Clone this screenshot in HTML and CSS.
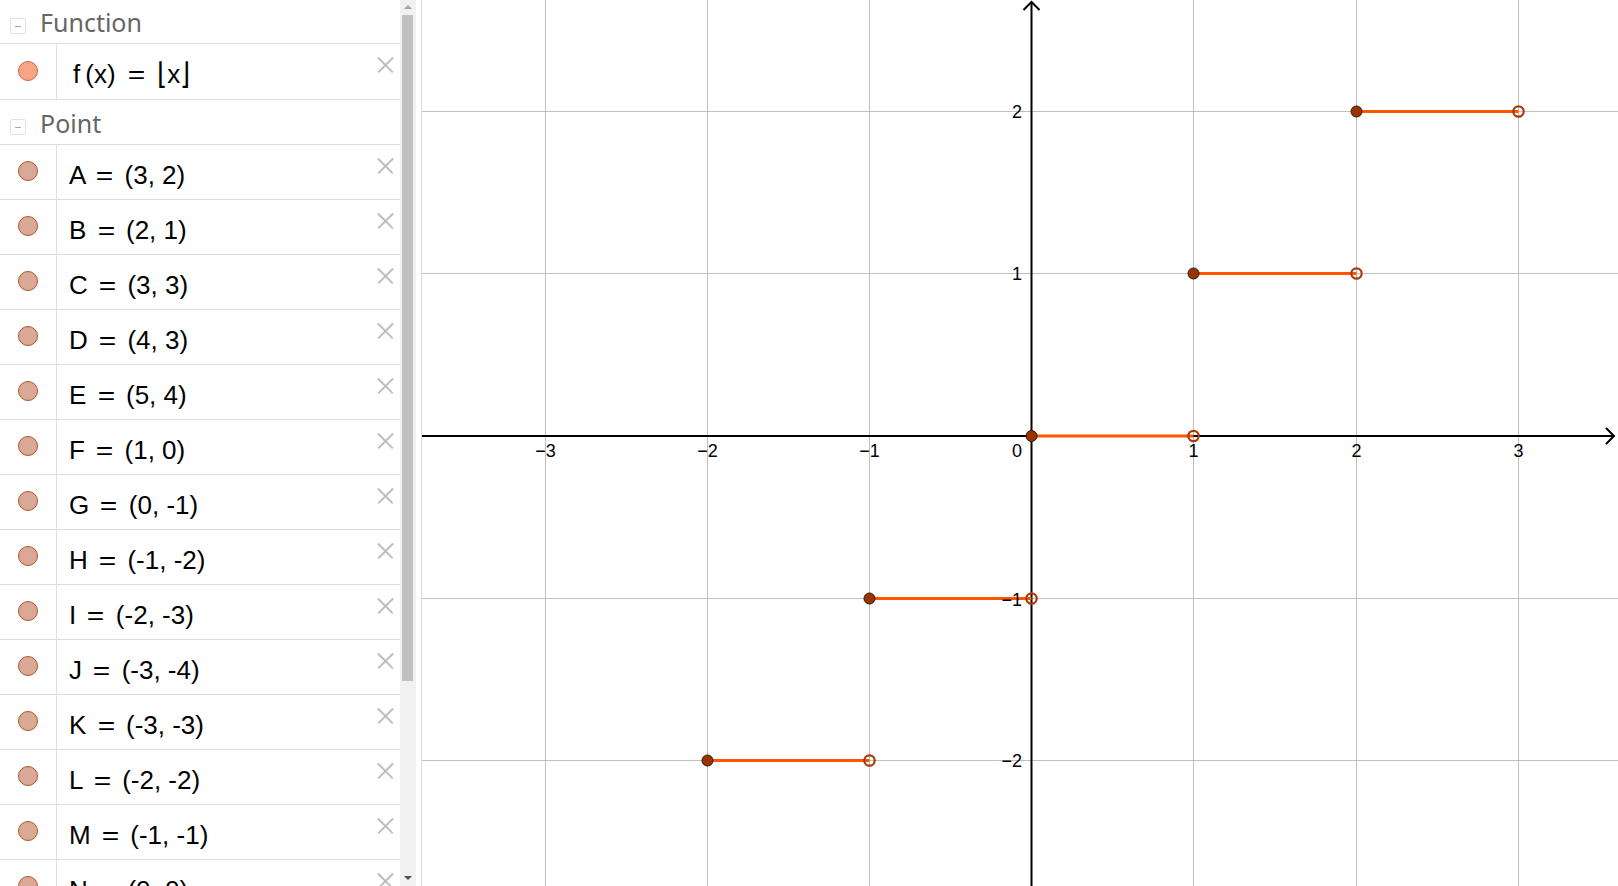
FILE: index.html
```html
<!DOCTYPE html>
<html>
<head>
<meta charset="utf-8">
<link rel="stylesheet" href="styles.css">
</head>
<body>
<div class="app">
  <div class="algebra">
    <div class="list">
      <div class="group-head head-function"><span class="toggle"></span><span class="group-title">Function</span></div>
      <div class="item item-first">
        <div class="marble"><span class="dot dot-fn"></span></div>
        <div class="expr">f<span class="sp1"></span>(x) <span class="eq eq-wide">=</span> <span class="fl">⌊</span>x<span class="fl">⌋</span></div>
        <span class="close"></span>
      </div>
      <div class="group-head head-point"><span class="toggle"></span><span class="group-title">Point</span></div>
      <div class="item"><div class="marble"><span class="dot"></span></div><div class="expr">A <span class="eq">=</span> (3, 2)</div><span class="close"></span></div>
      <div class="item"><div class="marble"><span class="dot"></span></div><div class="expr">B <span class="eq">=</span> (2, 1)</div><span class="close"></span></div>
      <div class="item"><div class="marble"><span class="dot"></span></div><div class="expr">C <span class="eq">=</span> (3, 3)</div><span class="close"></span></div>
      <div class="item"><div class="marble"><span class="dot"></span></div><div class="expr">D <span class="eq">=</span> (4, 3)</div><span class="close"></span></div>
      <div class="item"><div class="marble"><span class="dot"></span></div><div class="expr">E <span class="eq">=</span> (5, 4)</div><span class="close"></span></div>
      <div class="item"><div class="marble"><span class="dot"></span></div><div class="expr">F <span class="eq">=</span> (1, 0)</div><span class="close"></span></div>
      <div class="item"><div class="marble"><span class="dot"></span></div><div class="expr">G <span class="eq">=</span> (0, -1)</div><span class="close"></span></div>
      <div class="item"><div class="marble"><span class="dot"></span></div><div class="expr">H <span class="eq">=</span> (-1, -2)</div><span class="close"></span></div>
      <div class="item"><div class="marble"><span class="dot"></span></div><div class="expr">I <span class="eq">=</span> (-2, -3)</div><span class="close"></span></div>
      <div class="item"><div class="marble"><span class="dot"></span></div><div class="expr">J <span class="eq">=</span> (-3, -4)</div><span class="close"></span></div>
      <div class="item"><div class="marble"><span class="dot"></span></div><div class="expr">K <span class="eq">=</span> (-3, -3)</div><span class="close"></span></div>
      <div class="item"><div class="marble"><span class="dot"></span></div><div class="expr">L <span class="eq">=</span> (-2, -2)</div><span class="close"></span></div>
      <div class="item"><div class="marble"><span class="dot"></span></div><div class="expr">M <span class="eq">=</span> (-1, -1)</div><span class="close"></span></div>
      <div class="item"><div class="marble"><span class="dot"></span></div><div class="expr">N <span class="eq">=</span> (0, 0)</div><span class="close"></span></div>
    </div>
    <div class="scrollbar">
      <span class="arrow-up"></span>
      <span class="thumb"></span>
      <span class="arrow-down"></span>
    </div>
  </div>
  <div class="graphics">
    <svg class="plot" width="1196" height="886" viewBox="4 0 1196 886">
      <g class="grid" stroke="#c0c0c0" stroke-width="1">
        <line x1="127.5" y1="0" x2="127.5" y2="886"/>
        <line x1="289.5" y1="0" x2="289.5" y2="886"/>
        <line x1="451.5" y1="0" x2="451.5" y2="886"/>
        <line x1="775.5" y1="0" x2="775.5" y2="886"/>
        <line x1="938.5" y1="0" x2="938.5" y2="886"/>
        <line x1="1100.5" y1="0" x2="1100.5" y2="886"/>
        <line x1="0" y1="111.5" x2="1200" y2="111.5"/>
        <line x1="0" y1="273.5" x2="1200" y2="273.5"/>
        <line x1="0" y1="598.5" x2="1200" y2="598.5"/>
        <line x1="0" y1="760.5" x2="1200" y2="760.5"/>
      </g>
      <g class="axes" stroke="#000" stroke-width="2" fill="none">
        <line x1="0" y1="436" x2="1196" y2="436"/>
        <polyline points="1188,428 1196,436 1188,444"/>
        <line x1="613.5" y1="2" x2="613.5" y2="886"/>
        <polyline points="605.5,10 613.5,2 621.5,10"/>
      </g>
      <g class="steps" stroke="#ff5500" stroke-width="3">
        <line x1="938.5" y1="111.5" x2="1100.5" y2="111.5"/>
        <line x1="775.5" y1="273.5" x2="938.5" y2="273.5"/>
        <line x1="613.5" y1="436" x2="775.5" y2="436"/>
        <line x1="451.5" y1="598.5" x2="613.5" y2="598.5"/>
        <line x1="289.5" y1="760.5" x2="451.5" y2="760.5"/>
      </g>
      <g class="ticks" font-family="Liberation Sans, Arial, sans-serif" font-size="18" fill="#000">
        <text x="127.5" y="457" text-anchor="middle">−3</text>
        <text x="289.5" y="457" text-anchor="middle">−2</text>
        <text x="451.5" y="457" text-anchor="middle">−1</text>
        <text x="604" y="457" text-anchor="end">0</text>
        <text x="775.5" y="457" text-anchor="middle">1</text>
        <text x="938.5" y="457" text-anchor="middle">2</text>
        <text x="1100.5" y="457" text-anchor="middle">3</text>
        <text x="604" y="118" text-anchor="end">2</text>
        <text x="604" y="280" text-anchor="end">1</text>
        <text x="604" y="606" text-anchor="end">−1</text>
        <text x="604" y="767" text-anchor="end">−2</text>
      </g>
      <g class="open" fill="none" stroke="#a63b0a" stroke-width="2.2">
        <circle cx="1100.5" cy="111.5" r="5.2"/>
        <circle cx="938.5" cy="273.5" r="5.2"/>
        <circle cx="775.5" cy="436" r="5.2"/>
        <circle cx="613.5" cy="598.5" r="5.2"/>
        <circle cx="451.5" cy="760.5" r="5.2"/>
      </g>
      <g class="closed" fill="#993300" stroke="#2a1a10" stroke-width="1">
        <circle cx="938.5" cy="111.5" r="5.5"/>
        <circle cx="775.5" cy="273.5" r="5.5"/>
        <circle cx="613.5" cy="436" r="5.5"/>
        <circle cx="451.5" cy="598.5" r="5.5"/>
        <circle cx="289.5" cy="760.5" r="5.5"/>
      </g>
    </svg>
  </div>
</div>
</body>
</html>
```

FILE: styles.css
```css
* { box-sizing: border-box; }
html, body {
  margin: 0;
  padding: 0;
  background: #fff;
  overflow: hidden;
}
.app {
  display: flex;
  width: 1618px;
  height: 886px;
}
.algebra {
  display: flex;
  width: 422px;
  height: 886px;
  border-right: 1px solid #dcdcdc;
  flex-shrink: 0;
}
.list {
  width: 400px;
  height: 886px;
  overflow: hidden;
}
.group-head {
  position: relative;
  border-bottom: 1px solid #dddddd;
  font-family: "Noto Sans", "Open Sans", sans-serif;
  font-size: 25px;
  line-height: 25px;
  color: #666;
}
.head-function { height: 44px; padding-top: 10px; }
.head-point { height: 45px; padding-top: 11px; }
.group-title { margin-left: 40px; }
.toggle {
  position: absolute;
  left: 10px;
  top: 18px;
  width: 16px;
  height: 16px;
  border: 1px solid #e2e2e2;
  border-radius: 2px;
}
.head-point .toggle { top: 19px; }
.toggle::after {
  content: "";
  position: absolute;
  left: 4px;
  top: 7px;
  width: 6px;
  height: 1px;
  background: #aaa;
}
.item {
  position: relative;
  display: flex;
  height: 55px;
  border-bottom: 1px solid #dddddd;
}
.item-first { height: 56px; }
.marble {
  width: 57px;
  flex-shrink: 0;
  border-right: 1px solid #e0e0e0;
  position: relative;
}
.dot {
  position: absolute;
  left: 18px;
  top: 16px;
  width: 20px;
  height: 20px;
  border-radius: 50%;
  background: #d9a996;
  border: 1px solid #b0552f;
}
.item-first .dot { top: 17px; }
.dot-fn {
  background: #f8a585;
  border-color: #cf6440;
}
.expr {
  padding-left: 12px;
  padding-top: 17px;
  font-family: "Liberation Sans", Arial, sans-serif;
  font-size: 26px;
  line-height: 26px;
  color: #000;
  white-space: pre;
}
.item-first .expr { padding-left: 16px; }
.sp1 { display: inline-block; width: 5px; }
.eq { display: inline-block; margin: 0 5px; transform: scaleX(1.15); }
.eq-wide { margin: 0 6px; }
.fl {
  font-family: "DejaVu Sans", sans-serif;
  font-weight: 200;
  display: inline-block;
  transform: scaleY(1.15);
}
.close {
  position: absolute;
  left: 377px;
  top: 13px;
  width: 16px;
  height: 16px;
}
.close::before, .close::after {
  content: "";
  position: absolute;
  left: -2px;
  top: 7px;
  width: 21px;
  height: 1.5px;
  background: #bdbdbd;
  transform: rotate(45deg);
}
.close::after { transform: rotate(-45deg); }
.scrollbar {
  position: relative;
  width: 16px;
  height: 886px;
  background: #f1f1f1;
}
.arrow-up {
  position: absolute;
  left: 4px;
  top: 5px;
  border-left: 4px solid transparent;
  border-right: 4px solid transparent;
  border-bottom: 4px solid #a3a3a3;
}
.arrow-down {
  position: absolute;
  left: 4px;
  top: 876px;
  border-left: 4px solid transparent;
  border-right: 4px solid transparent;
  border-top: 4px solid #505050;
}
.thumb {
  position: absolute;
  left: 2px;
  top: 15px;
  width: 11px;
  height: 666px;
  background: #c1c1c1;
}
.graphics {
  flex: 1;
  height: 886px;
  overflow: hidden;
}
.plot { display: block; }
```
